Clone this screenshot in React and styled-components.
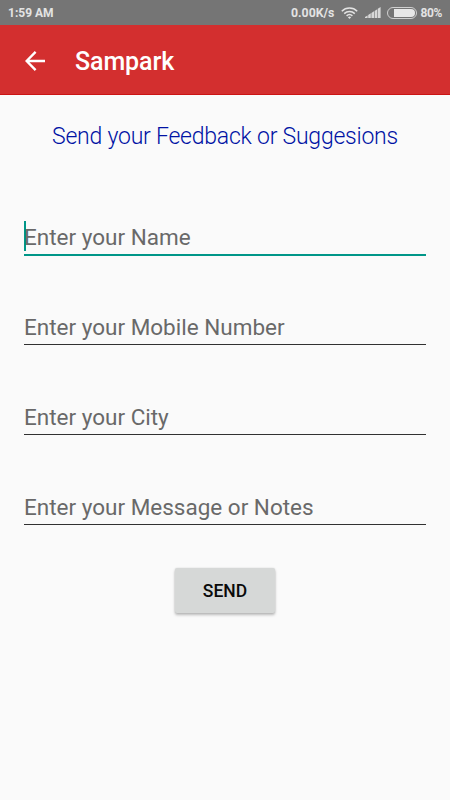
import React from 'react';
import styled, { createGlobalStyle } from 'styled-components';

const GlobalStyle = createGlobalStyle`
	* {
		box-sizing: border-box;
	}

	body {
		margin: 0;
		background: #fafafa;
		font-family: Roboto, "Liberation Sans", sans-serif;
	}
`;

const Screen = styled.div`
	display: flex;
	flex-direction: column;
	width: 450px;
	height: 800px;
	overflow: hidden;
	background: #fafafa;
`;

const StatusBar = styled.div`
	display: flex;
	align-items: center;
	height: 25px;
	padding: 1px 8px 0;
	background: #757575;
	color: #e3e3e3;
	font-size: 12px;
	font-weight: 700;
	line-height: 24px;
`;

const Speed = styled.span`
	margin-left: auto;
	font-size: 12.3px;
`;

const StatusIcon = styled.svg`
	display: block;
	flex: none;
	margin-bottom: 1px;
	margin-left: ${props => props.$gap}px;
`;

const Battery = styled.span`
	margin-left: 3px;
	font-size: 12px;
	letter-spacing: -0.35px;
`;

const Toolbar = styled.header`
	display: flex;
	align-items: center;
	height: 70px;
	padding: 2px 25px 0;
	background: #d32f2f;
	border-bottom: 1px solid #cb1414;
	color: #fff;
`;

const Title = styled.h1`
	margin: 2px 0 0 30px;
	font-size: 25px;
	font-weight: 500;
	letter-spacing: -0.1px;
	line-height: 30px;
`;

const Form = styled.main`
	display: flex;
	flex-direction: column;
	align-items: center;
	padding: 27px 24px 0;
`;

const Heading = styled.h2`
	margin: 0 0 59px;
	color: #0012a4;
	font-size: 23px;
	font-weight: 300;
	letter-spacing: -0.23px;
	line-height: 30px;
	white-space: nowrap;
`;

const Field = styled.div`
	display: flex;
	align-items: flex-start;
	width: 100%;
	height: ${props => (props.$focused ? 45 : 44)}px;
	margin-bottom: ${props => (props.$focused ? 45 : 46)}px;
	padding-top: 10px;
	border-bottom: ${props => (props.$focused ? '2px solid #009688' : '1px solid #313131')};
`;

const Placeholder = styled.span`
	padding-top: 1px;
	color: #696969;
	font-size: 22.5px;
	line-height: 30px;
`;

const Caret = styled.span`
	width: 2px;
	height: 30px;
	margin-right: -2px;
	background: #009688;
`;

const SendButton = styled.button`
	width: 100px;
	height: 45px;
	margin-top: -3px;
	padding: 1px 0 0;
	border: 0;
	border-radius: 2px;
	background: #d6d8d7;
	box-shadow: 0 2px 3px rgba(0, 0, 0, 0.26), 0 0 2px rgba(0, 0, 0, 0.12);
	color: #0a0a0a;
	font-family: inherit;
	font-size: 17.5px;
	font-weight: 500;
`;

const fields = [
	{ id: 'name', label: 'Enter your Name', focused: true },
	{ id: 'mobile', label: 'Enter your Mobile Number' },
	{ id: 'city', label: 'Enter your City' },
	{ id: 'message', label: 'Enter your Message or Notes' },
];

const WifiIcon = () => (
	<StatusIcon $gap={7} width="17" height="12" viewBox="0 0 17 12" fill="none" stroke="#e3e3e3" strokeWidth="1.5">
		<path d="M0.8 4.2C5 0 12 0 16.2 4.2" />
		<path d="M3.2 6.6C6.2 3.7 10.8 3.7 13.8 6.6" />
		<path d="M5.6 8.9C7.3 7.3 9.7 7.3 11.4 8.9" />
		<path d="M6.9 10.2L8.5 11.9L10.1 10.2Q8.5 9 6.9 10.2Z" fill="#e3e3e3" stroke="none" />
	</StatusIcon>
);

const SignalIcon = () => (
	<StatusIcon $gap={7} width="16" height="11" viewBox="0 0 16 11" fill="#d8d8d8">
		<path d="M0 11V10L2.6 8.4V11ZM3.2 11V8L5.8 6.3V11ZM6.4 11V5.9L9 4.3V11ZM9.6 11V3.9L12.2 2.2V11ZM12.8 11V1.8L15.6 0V11Z" />
	</StatusIcon>
);

const BatteryIcon = () => (
	<StatusIcon $gap={6} width="30" height="12" viewBox="0 0 30 12">
		<rect x="0.5" y="0.5" width="29" height="11" rx="5.5" fill="none" stroke="#d0d0d0" />
		<path d="M7 2H24A4 4 0 0 1 24 10H7Z" fill="#e8e8e8" />
	</StatusIcon>
);

const BackIcon = () => (
	<svg width="20" height="20" viewBox="0 0 20 20" fill="none" stroke="#fff" strokeWidth="2.4">
		<path d="M20 10H2M10.6 0.9L1.6 10L10.6 19.1" />
	</svg>
);

const App = () => {
	return (
		<Screen>
			<GlobalStyle />
			<StatusBar>
				<span>1:59 AM</span>
				<Speed>0.00K/s</Speed>
				<WifiIcon />
				<SignalIcon />
				<BatteryIcon />
				<Battery>80%</Battery>
			</StatusBar>
			<Toolbar>
				<BackIcon />
				<Title>Sampark</Title>
			</Toolbar>
			<Form>
				<Heading>Send your Feedback or Suggesions</Heading>
				{fields.map(field => (
					<Field key={field.id} $focused={field.focused}>
						{field.focused && <Caret />}
						<Placeholder>{field.label}</Placeholder>
					</Field>
				))}
				<SendButton type="button">SEND</SendButton>
			</Form>
		</Screen>
	);
};

export default App;
